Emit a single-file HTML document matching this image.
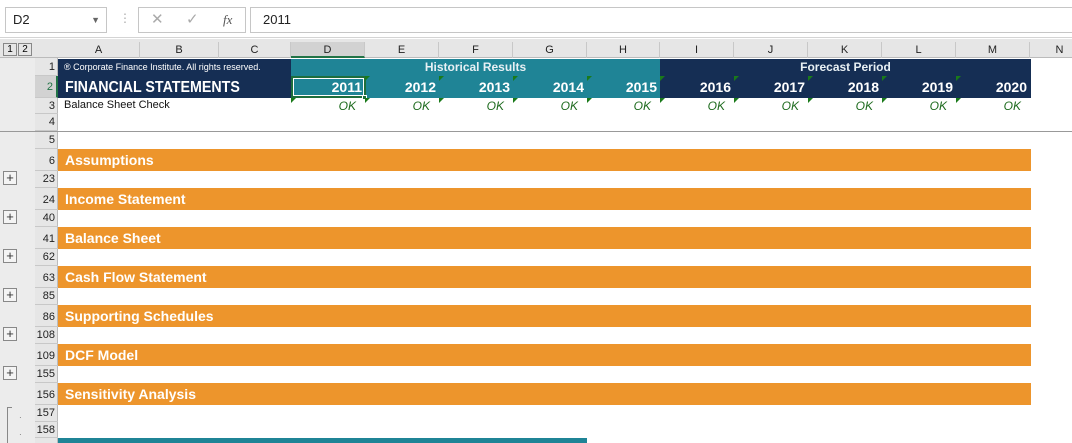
<!DOCTYPE html>
<html><head><style>
*{margin:0;padding:0;box-sizing:border-box}
body{width:1072px;height:443px;overflow:hidden;background:#fff;font-family:"Liberation Sans",Arial,sans-serif;position:relative}
.a{position:absolute}
.hdr{background:#e6e6e6}
.ch{position:absolute;top:42px;height:16px;font-size:11px;color:#222;text-align:center;line-height:16px;border-right:1px solid #c8c8c8}
.rn{position:absolute;left:35px;width:23px;font-size:11px;color:#222;text-align:right;padding-right:3px;border-bottom:1px solid #c8c8c8}
.yr{position:absolute;top:78px;height:18px;font-size:14px;font-weight:bold;color:#fff;text-align:right;line-height:18px;padding-right:3px}
.ok{position:absolute;top:98px;height:16px;font-size:12px;font-style:italic;color:#1e6b1e;text-align:right;line-height:16px;padding-right:9px}
.tri{position:absolute;width:0;height:0;border-top:5px solid #1a7a1a;border-right:5px solid transparent}
.or{position:absolute;left:58px;width:973px;height:22px;background:#ed952c;color:#fff;font-weight:bold;font-size:14px;line-height:22px;padding-left:7px}
.plus{position:absolute;left:3px;width:14px;height:14px;border:1px solid #888;background:#f4f4f4;font-size:13px;line-height:11px;text-align:center;color:#333}
</style></head><body>
<div class="a" style="left:0;top:0;width:1072px;height:38px;background:#fff;border-bottom:1px solid #d4d4d4"></div>
<div class="a" style="left:5px;top:7px;width:102px;height:26px;border:1px solid #c6c6c6;font-size:13px;line-height:24px;padding-left:7px;color:#222">D2<span style="position:absolute;right:6px;top:0;font-size:9px;color:#666">▼</span></div>
<div class="a" style="left:119px;top:11px;font-size:12px;color:#aaa">⋮</div>
<div class="a" style="left:138px;top:7px;width:108px;height:26px;border:1px solid #c6c6c6;font-size:15px;line-height:24px;color:#aaa"><span style="position:absolute;left:12px">✕</span><span style="position:absolute;left:47px">✓</span><span style="position:absolute;left:84px;font-family:'Liberation Serif',serif;font-style:italic;color:#555;font-size:13px">fx</span></div>
<div class="a" style="left:250px;top:7px;width:822px;height:26px;border:1px solid #c6c6c6;border-right:none;font-size:13px;line-height:24px;padding-left:12px;color:#222">2011</div>
<div class="a hdr" style="left:0;top:39px;width:1072px;height:19px;border-bottom:1px solid #bbb"></div>
<div class="a hdr" style="left:0;top:58px;width:58px;height:385px;border-right:1px solid #bbb"></div>
<div class="a" style="left:0;top:58px;width:35px;height:385px;background:#ececec"></div>
<div class="a" style="left:3px;top:43px;width:14px;height:13px;border:1px solid #888;font-size:10px;text-align:center;line-height:11px">1</div>
<div class="a" style="left:18px;top:43px;width:14px;height:13px;border:1px solid #888;font-size:10px;text-align:center;line-height:11px">2</div>
<div class="ch" style="left:58px;width:82px">A</div><div class="ch" style="left:140px;width:79px">B</div><div class="ch" style="left:219px;width:72px">C</div>
<div class="ch" style="left:291px;width:74px;background:#d2d2d2;border-bottom:2px solid #217346">D</div><div class="ch" style="left:365px;width:74px">E</div><div class="ch" style="left:439px;width:74px">F</div><div class="ch" style="left:513px;width:74px">G</div><div class="ch" style="left:587px;width:73px">H</div><div class="ch" style="left:660px;width:74px">I</div><div class="ch" style="left:734px;width:74px">J</div><div class="ch" style="left:808px;width:74px">K</div><div class="ch" style="left:882px;width:74px">L</div><div class="ch" style="left:956px;width:74px">M</div><div class="ch" style="left:1030px;width:60px">N</div>
<div class="rn" style="top:59px;height:17px;line-height:17px">1</div>
<div class="rn" style="top:76px;height:22px;line-height:22px;background:#d2d2d2;border-right:2px solid #217346;color:#217346">2</div>
<div class="rn" style="top:98px;height:16px;line-height:16px">3</div>
<div class="rn" style="top:114px;height:17px;line-height:17px">4</div>
<div class="rn" style="top:132px;height:17px;line-height:17px">5</div>
<div class="rn" style="top:149px;height:22px;line-height:24px">6</div>
<div class="rn" style="top:171px;height:17px;line-height:17px">23</div>
<div class="rn" style="top:188px;height:22px;line-height:24px">24</div>
<div class="rn" style="top:210px;height:17px;line-height:17px">40</div>
<div class="rn" style="top:227px;height:22px;line-height:24px">41</div>
<div class="rn" style="top:249px;height:17px;line-height:17px">62</div>
<div class="rn" style="top:266px;height:22px;line-height:24px">63</div>
<div class="rn" style="top:288px;height:17px;line-height:17px">85</div>
<div class="rn" style="top:305px;height:22px;line-height:24px">86</div>
<div class="rn" style="top:327px;height:17px;line-height:17px">108</div>
<div class="rn" style="top:344px;height:22px;line-height:24px">109</div>
<div class="rn" style="top:366px;height:17px;line-height:17px">155</div>
<div class="rn" style="top:383px;height:22px;line-height:24px">156</div>
<div class="rn" style="top:405px;height:17px;line-height:17px">157</div>
<div class="rn" style="top:422px;height:16px;line-height:16px">158</div>
<div class="plus" style="top:171px">+</div><div class="plus" style="top:210px">+</div><div class="plus" style="top:249px">+</div><div class="plus" style="top:288px">+</div><div class="plus" style="top:327px">+</div><div class="plus" style="top:366px">+</div>
<div class="a" style="left:7px;top:407px;width:5px;height:36px;border-left:1px solid #888;border-top:1px solid #888"></div>
<div class="a" style="left:19px;top:413px;font-size:8px;color:#666">·</div><div class="a" style="left:19px;top:430px;font-size:8px;color:#666">·</div>
<div class="a" style="left:58px;top:131px;width:1014px;height:1px;background:#999"></div>
<div class="a" style="left:0;top:131px;width:58px;height:1px;background:#999"></div>
<div class="a" style="left:58px;top:59px;width:233px;height:39px;background:#152e54"></div>
<div class="a" style="left:291px;top:59px;width:369px;height:39px;background:#1f8496"></div>
<div class="a" style="left:660px;top:59px;width:371px;height:39px;background:#152e54"></div>
<div class="a" style="left:64px;top:62px;font-size:9px;color:#fff">® Corporate Finance Institute. All rights reserved.</div>
<div class="a" style="left:65px;top:78px;font-size:16px;font-weight:bold;color:#fff;line-height:20px;transform:scaleX(0.89);transform-origin:left">FINANCIAL STATEMENTS</div>
<div class="a" style="left:291px;top:60px;width:369px;text-align:center;font-size:12px;font-weight:bold;color:#e8f0f4">Historical Results</div>
<div class="a" style="left:660px;top:60px;width:371px;text-align:center;font-size:12px;font-weight:bold;color:#e8f0f4">Forecast Period</div>
<div class="yr" style="left:291px;width:74px">2011</div><div class="yr" style="left:365px;width:74px">2012</div><div class="yr" style="left:439px;width:74px">2013</div><div class="yr" style="left:513px;width:74px">2014</div><div class="yr" style="left:587px;width:73px">2015</div><div class="yr" style="left:660px;width:74px">2016</div><div class="yr" style="left:734px;width:74px">2017</div><div class="yr" style="left:808px;width:74px">2018</div><div class="yr" style="left:882px;width:74px">2019</div><div class="yr" style="left:956px;width:74px">2020</div>
<div class="a" style="left:291px;top:76px;width:75px;height:22px;border:2px solid #1e6e3c"></div>
<div class="a" style="left:293px;top:78px;width:71px;height:18px;border:1px solid #fff"></div>
<div class="a" style="left:362px;top:95px;width:5px;height:5px;background:#1e6e3c;border:1px solid #fff"></div>
<div class="tri" style="left:365px;top:76px"></div><div class="tri" style="left:439px;top:76px"></div><div class="tri" style="left:513px;top:76px"></div><div class="tri" style="left:587px;top:76px"></div><div class="tri" style="left:660px;top:76px"></div><div class="tri" style="left:734px;top:76px"></div><div class="tri" style="left:808px;top:76px"></div><div class="tri" style="left:882px;top:76px"></div><div class="tri" style="left:956px;top:76px"></div>
<div class="tri" style="left:291px;top:98px"></div><div class="tri" style="left:365px;top:98px"></div><div class="tri" style="left:439px;top:98px"></div><div class="tri" style="left:513px;top:98px"></div><div class="tri" style="left:587px;top:98px"></div><div class="tri" style="left:660px;top:98px"></div><div class="tri" style="left:734px;top:98px"></div><div class="tri" style="left:808px;top:98px"></div><div class="tri" style="left:882px;top:98px"></div><div class="tri" style="left:956px;top:98px"></div>
<div class="a" style="left:64px;top:99px;font-size:11px;color:#111">Balance Sheet Check</div>
<div class="ok" style="left:291px;width:74px">OK</div><div class="ok" style="left:365px;width:74px">OK</div><div class="ok" style="left:439px;width:74px">OK</div><div class="ok" style="left:513px;width:74px">OK</div><div class="ok" style="left:587px;width:73px">OK</div><div class="ok" style="left:660px;width:74px">OK</div><div class="ok" style="left:734px;width:74px">OK</div><div class="ok" style="left:808px;width:74px">OK</div><div class="ok" style="left:882px;width:74px">OK</div><div class="ok" style="left:956px;width:74px">OK</div>
<div class="or" style="top:149px">Assumptions</div>
<div class="or" style="top:188px">Income Statement</div>
<div class="or" style="top:227px">Balance Sheet</div>
<div class="or" style="top:266px">Cash Flow Statement</div>
<div class="or" style="top:305px">Supporting Schedules</div>
<div class="or" style="top:344px">DCF Model</div>
<div class="or" style="top:383px">Sensitivity Analysis</div>
<div class="a" style="left:58px;top:438px;width:529px;height:5px;background:#1f8496"></div>
</body></html>
